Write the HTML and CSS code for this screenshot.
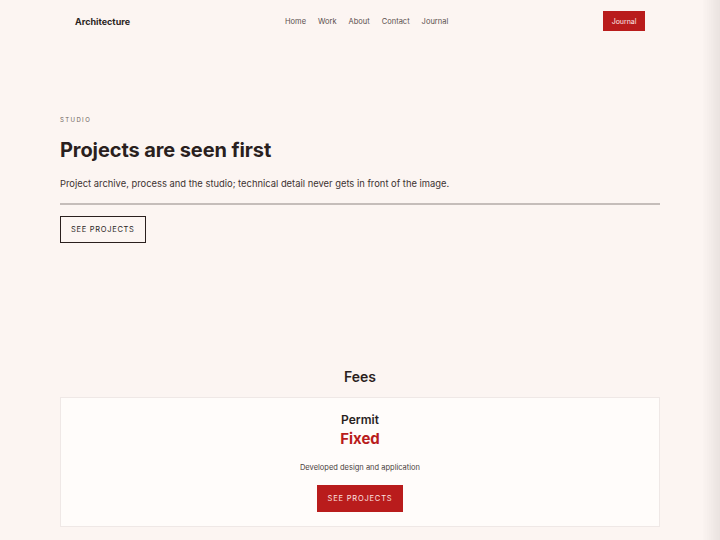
FILE: index.html
```html
<!DOCTYPE html>
<html lang="en">
<head>
<meta charset="utf-8">
<title>Architecture</title>
<link rel="stylesheet" href="styles.css">
</head>
<body>
<header class="site-header">
  <a class="brand" href="#">Architecture</a>
  <nav class="nav">
    <a href="#">Home</a>
    <a href="#">Work</a>
    <a href="#">About</a>
    <a href="#">Contact</a>
    <a href="#">Journal</a>
  </nav>
  <a class="btn-nav" href="#">Journal</a>
</header>
<main class="main">
  <section class="hero">
    <p class="eyebrow">STUDIO</p>
    <h1 class="hero-title">Projects are seen first</h1>
    <p class="hero-text">Project archive, process and the studio; technical detail never gets in front of the image.</p>
    <hr class="rule">
    <a class="btn-outline" href="#">SEE PROJECTS</a>
  </section>
  <section class="fees">
    <h2 class="fees-title">Fees</h2>
    <div class="card">
      <h3 class="card-title">Permit</h3>
      <p class="card-price">Fixed</p>
      <p class="card-text">Developed design and application</p>
      <a class="btn-solid" href="#">SEE PROJECTS</a>
    </div>
  </section>
</main>
<div class="edge-shade"></div>
</body>
</html>
```
FILE: styles.css
```css
* { box-sizing: border-box; }
html, body { margin: 0; padding: 0; }
body {
  background: #fcf5f2;
  font-family: "Inter", "Noto Sans", sans-serif;
  color: #2a1f1e;
  width: 720px;
  height: 540px;
  overflow: hidden;
}
a { text-decoration: none; color: inherit; }
.site-header {
  display: flex;
  align-items: center;
  justify-content: space-between;
  height: 42px;
  padding: 0 75px;
}
.brand { font-weight: 700; font-size: 9px; color: #2a1f1e; }
.nav { display: flex; gap: 12px; font-size: 7.5px; color: #5a4f4d; }
.btn-nav {
  background: #b91c1c;
  color: #fde8e6;
  font-size: 7px;
  padding: 0 8.5px;
  height: 20px;
  display: flex;
  align-items: center;
}
.main { padding: 0 60px; }
.hero { padding-top: 74px; }
.eyebrow { margin: 0; font-size: 6px; letter-spacing: 1.4px; color: #6f6461; }
.hero-title { margin: 15px 0 0; font-size: 20px; font-weight: 700; line-height: 1.2; color: #2a1f1e; letter-spacing: -0.1px; }
.hero-text { margin: 16px 0 0; font-size: 9.4px; color: #3d3331; }
.rule { margin: 14px 0 0; border: 0; height: 2px; background: #c5bdba; }
.btn-outline {
  display: inline-flex;
  align-items: center;
  margin-top: 11px;
  height: 27px;
  padding: 0 10px;
  border: 1px solid #2a1f1e;
  font-size: 7.5px;
  letter-spacing: 0.7px;
  color: #2a1f1e;
}
.fees { padding-top: 125px; text-align: center; }
.fees-title { margin: 0; font-size: 14px; font-weight: 600; line-height: 18px; }
.card {
  margin-top: 11px;
  background: #fffcfa;
  border: 1px solid #efe8e6;
  padding: 14px 0 14px;
  display: flex;
  flex-direction: column;
  align-items: center;
}
.card-title { margin: 0; font-size: 12px; font-weight: 600; line-height: 16px; }
.card-price { margin: 1px 0 0; font-size: 15px; font-weight: 700; color: #b91c1c; line-height: 20px; }
.card-text { margin: 14px 0 0; font-size: 7.5px; color: #4a3f3d; }
.btn-solid {
  margin-top: 13px;
  background: #b91c1c;
  color: #fde3e0;
  height: 27px;
  padding: 0 10.5px;
  display: inline-flex;
  align-items: center;
  font-size: 7.5px;
  letter-spacing: 0.8px;
}
.edge-shade {
  position: fixed;
  top: 0;
  right: 0;
  width: 18px;
  height: 100%;
  background: linear-gradient(to right, rgba(0,0,0,0), rgba(0,0,0,0.07));
  pointer-events: none;
}
```
